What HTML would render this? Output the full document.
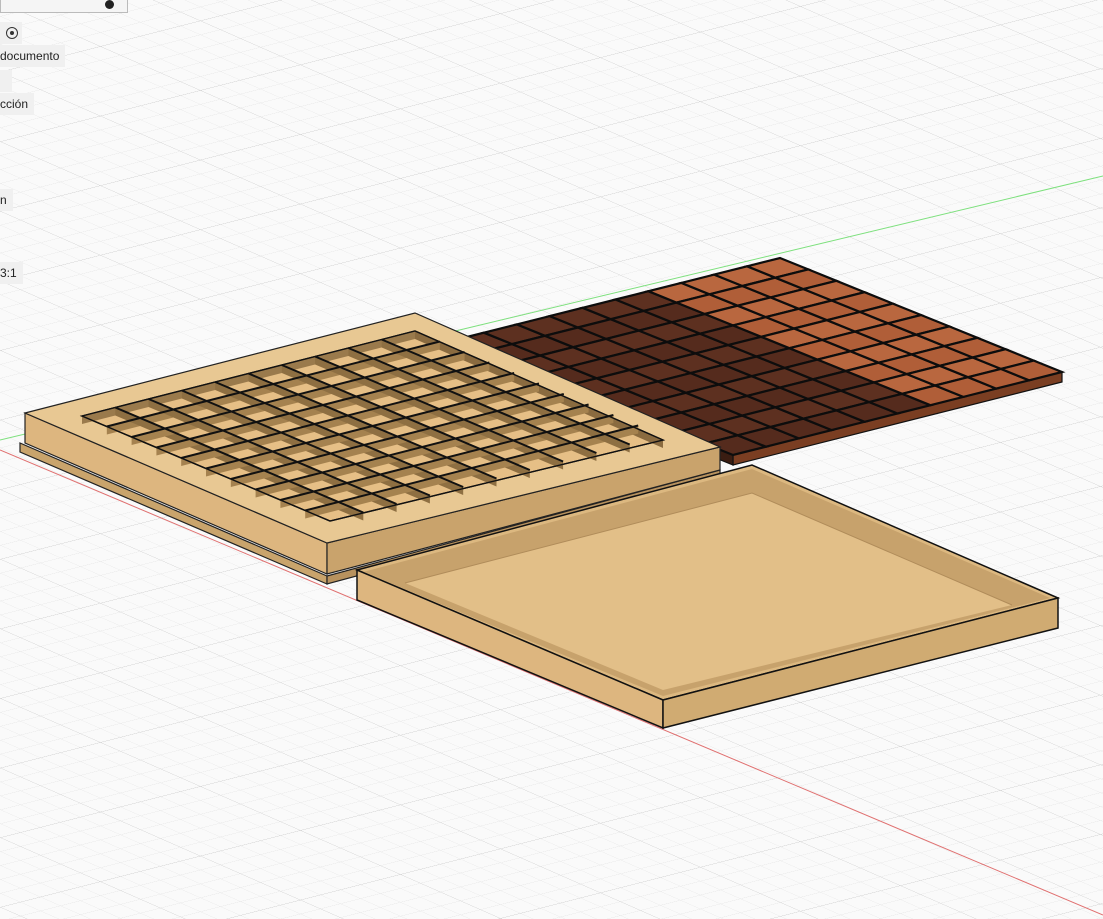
<!DOCTYPE html>
<html><head><meta charset="utf-8"><style>
html,body{margin:0;padding:0;width:1103px;height:919px;overflow:hidden;background:#fafafa;font-family:"Liberation Sans",sans-serif}
svg{position:absolute;left:0;top:0}
.lbl{position:absolute;background:#f0f0f0;font-size:12px;color:#222;padding:0 6px;height:22px;line-height:22px}
</style></head><body>
<svg id="s" width="1103" height="919" viewBox="0 0 1103 919">
<defs>
<pattern id="g" width="20" height="20" patternUnits="userSpaceOnUse" patternTransform="matrix(1,-0.256,1,0.44,0,420)">
<path d="M0 0H20M0 0V20" stroke="#e2e2e2" stroke-width="0.8" fill="none"/></pattern>
<pattern id="G" width="100" height="100" patternUnits="userSpaceOnUse" patternTransform="matrix(1,-0.256,1,0.44,0,420)">
<path d="M0 0H100M0 0V100" stroke="#c8c8c8" stroke-width="0.8" fill="none"/></pattern>
</defs>
<rect width="1103" height="919" fill="#fafafa"/>
<rect width="1103" height="919" fill="url(#g)"/>
<rect width="1103" height="919" fill="url(#G)"/>
<line x1="0" y1="440" x2="1103" y2="176" stroke="#7de07d" stroke-width="1"/>
<line x1="0" y1="450" x2="1103" y2="915" stroke="#e07070" stroke-width="1"/>
<g id="choc"></g>
<!-- left tray -->
<polygon points="20,443 327,576 327,584 20,452" fill="#c9a46c" stroke="#222" stroke-width="1.2"/>
<polygon points="327,576 720,470 720,478 327,584" fill="#b8925e" stroke="#222" stroke-width="1.2"/>
<polygon points="25,413 327,543 327,574 25,443" fill="#ddb67f" stroke="#222" stroke-width="1.2"/>
<polygon points="327,543 720,447 720,470 327,574" fill="#c9a36c" stroke="#222" stroke-width="1.2"/>
<polygon points="25,413 415,313 720,447 327,543" fill="#e8c893" stroke="#222" stroke-width="1.2"/>
<polygon points="82,416 415,331 663,440 330,521" fill="#e6bf86" stroke="#111" stroke-width="1.4"/>
<g id="cells"></g>
<!-- open tray -->
<polygon points="357,570 752,465 1058,598 663,700" fill="#dcb880" stroke="#111" stroke-width="1.5"/>
<polygon points="363,572 752,469 1050,598 663,696" fill="#c7a26c"/>
<polygon points="405,583 752,493 1012,605 663,690" fill="#e2bf88"/>
<polyline points="405,583 752,493 1012,605" fill="none" stroke="#b08c5a" stroke-width="1"/>
<polygon points="357,570 663,700 663,728 357,600" fill="#ddb67f" stroke="#111" stroke-width="1.5"/>
<polygon points="663,700 1058,598 1058,628 663,728" fill="#d0ab72" stroke="#111" stroke-width="1.5"/>
</svg>
<div style="position:absolute;left:0;top:0;width:126px;height:12px;border:1px solid #bbb;border-top:none;background:#f5f5f5"></div>
<div style="position:absolute;left:105px;top:0;width:9px;height:9px;border-radius:50%;background:#222"></div>
<div class="lbl" style="left:0;top:22px;width:10px;"><span style="display:inline-block;width:10px;height:10px;border:1px solid #333;border-radius:50%;margin-top:5px;position:relative"><span style="position:absolute;left:3px;top:3px;width:4px;height:4px;background:#333;border-radius:50%"></span></span></div>
<div class="lbl" style="left:0;top:45px;padding-left:0">documento</div>
<div class="lbl" style="left:0;top:70px;width:0"></div>
<div class="lbl" style="left:0;top:93px;padding-left:0">cción</div>
<div class="lbl" style="left:0;top:189px;padding-left:0">n</div>
<div class="lbl" style="left:0;top:262px;padding-left:0">3:1</div>
<script>
var NS="http://www.w3.org/2000/svg";
function P(L,B,F,u,v){return [L[0]+u*(B[0]-L[0])+v*(F[0]-L[0]),L[1]+u*(B[1]-L[1])+v*(F[1]-L[1])];}
function poly(g,pts,fill,stroke,sw){var p=document.createElementNS(NS,"polygon");p.setAttribute("points",pts.map(function(a){return a[0].toFixed(1)+","+a[1].toFixed(1)}).join(" "));p.setAttribute("fill",fill);if(stroke){p.setAttribute("stroke",stroke);p.setAttribute("stroke-width",sw);}g.appendChild(p);}
function line(g,a,b,col,w){var l=document.createElementNS(NS,"line");l.setAttribute("x1",a[0]);l.setAttribute("y1",a[1]);l.setAttribute("x2",b[0]);l.setAttribute("y2",b[1]);l.setAttribute("stroke",col);l.setAttribute("stroke-width",w);g.appendChild(l);}
// chocolate
var c=document.getElementById("choc");
var L=[451,341],B=[780,258],F=[733,455],R=[1062,372],N=10;
poly(c,[F,R,[R[0],R[1]+10],[F[0],F[1]+10]],"#7a3e22","#111",1.2);
poly(c,[[L[0],L[1]],F,[F[0],F[1]+10],[L[0],L[1]+10]],"#3a1d12","#111",1.2);
for(var i=0;i<N;i++)for(var j=0;j<N;j++){var u=i/N,v=j/N,d=1/N;
var dark=i<6;var col=dark?(j%2?"#552b1d":"#5d3020"):(j%2?"#b05e38":"#b9673f");
poly(c,[P(L,B,F,u,v),P(L,B,F,u+d,v),P(L,B,F,u+d,v+d),P(L,B,F,u,v+d)],col,"#0d0d0d",2.2);}
// left tray cells: walls
var g=document.getElementById("cells");
var L2=[82,416],B2=[415,331],F2=[330,521],M=10,h=8;
function dn(p,k){return [p[0],p[1]+k];}
// inner faces of back walls of cavity
poly(g,[L2,B2,dn(B2,h),dn(L2,h)],"#9a7a4c");
var R2=[663,440];
poly(g,[B2,R2,dn(R2,h),dn(B2,h)],"#8a6b40");
for(var k=1;k<M;k++){
 var t=k/M;
 // lines parallel to L->B (v const)
 var a=P(L2,B2,F2,0,t),b=P(L2,B2,F2,1,t);
 poly(g,[a,b,dn(b,h),dn(a,h)],"#a5824f");
 var a2=P(L2,B2,F2,t,0),b2=P(L2,B2,F2,t,1);
 poly(g,[a2,b2,dn(b2,h),dn(a2,h)],"#8e6f42");
}
for(var k=1;k<M;k++){
 var t=k/M;
 line(g,P(L2,B2,F2,0,t),P(L2,B2,F2,1,t),"#111",2);
 line(g,P(L2,B2,F2,t,0),P(L2,B2,F2,t,1),"#111",2);
}
poly(g,[L2,B2,R2,F2],"none","#111",1.4);
</script>
</body></html>
